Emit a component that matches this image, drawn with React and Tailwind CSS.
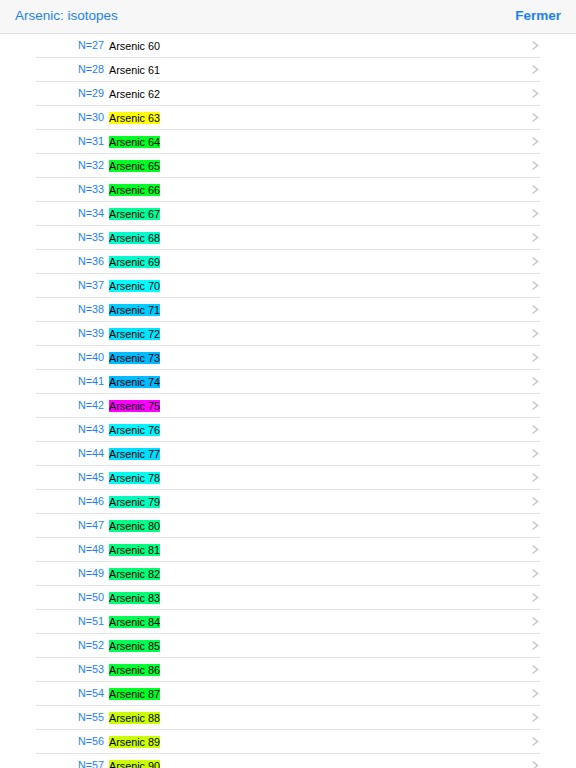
import React from 'react';

const highlight = {
  63: 'bg-[#ffff00]',
  64: 'bg-[#00ff22]',
  65: 'bg-[#00ff22]',
  66: 'bg-[#00ff22]',
  67: 'bg-[#00ff99]',
  68: 'bg-[#00ffcc]',
  69: 'bg-[#00ffcc]',
  70: 'bg-[#00ffff]',
  71: 'bg-[#00ccff]',
  72: 'bg-[#00e5ff]',
  73: 'bg-[#00bbff]',
  74: 'bg-[#00bbff]',
  75: 'bg-[#ff00ff]',
  76: 'bg-[#00f5ff]',
  77: 'bg-[#00ddff]',
  78: 'bg-[#00ffee]',
  79: 'bg-[#00ffbb]',
  80: 'bg-[#00ff88]',
  81: 'bg-[#00ff80]',
  82: 'bg-[#00ff77]',
  83: 'bg-[#00ff77]',
  84: 'bg-[#00ff55]',
  85: 'bg-[#00ff55]',
  86: 'bg-[#00ff33]',
  87: 'bg-[#00ff22]',
  88: 'bg-[#ccff00]',
  89: 'bg-[#ccff00]',
  90: 'bg-[#ccff00]',
};

const isotopes = [];
for (let n = 27; n <= 57; n++) {
  isotopes.push({ n, mass: n + 33 });
}

const Chevron = () => (
  <svg width="7" height="9" viewBox="0 0 7 9" fill="none" className="shrink-0">
    <path d="M1 0.8 L5.6 4.5 L1 8.2" stroke="#c4c4c8" strokeWidth="1.3" strokeLinecap="round" strokeLinejoin="round" />
  </svg>
);

export default function App() {
  return (
    <div className="w-[576px] h-[768px] overflow-hidden bg-white" style={{ fontFamily: '"Liberation Sans", Arial, sans-serif' }}>
      <header className="h-[34px] bg-[#f7f7f7] border-b border-[#e2e2e2] flex items-center justify-between px-[15px]">
        <span className="text-[13.5px] text-[#1a7ff5]">Arsenic: isotopes</span>
        <span className="text-[13.5px] font-bold text-[#1a7ff5]">Fermer</span>
      </header>
      <ul className="mx-[36px]">
        {isotopes.map(({ n, mass }) => (
          <li key={n} className="h-[24px] border-b border-[#e3e3e3] flex items-center pr-[1px]">
            <span className="w-[68px] text-right text-[10.8px] text-[#1a7ff5]">N={n}</span>
            <span className={`ml-[5px] text-[10.8px] leading-[12px] text-black ${highlight[mass] || ''}`}>
              Arsenic {mass}
            </span>
            <span className="flex-1" />
            <Chevron />
          </li>
        ))}
      </ul>
    </div>
  );
}
